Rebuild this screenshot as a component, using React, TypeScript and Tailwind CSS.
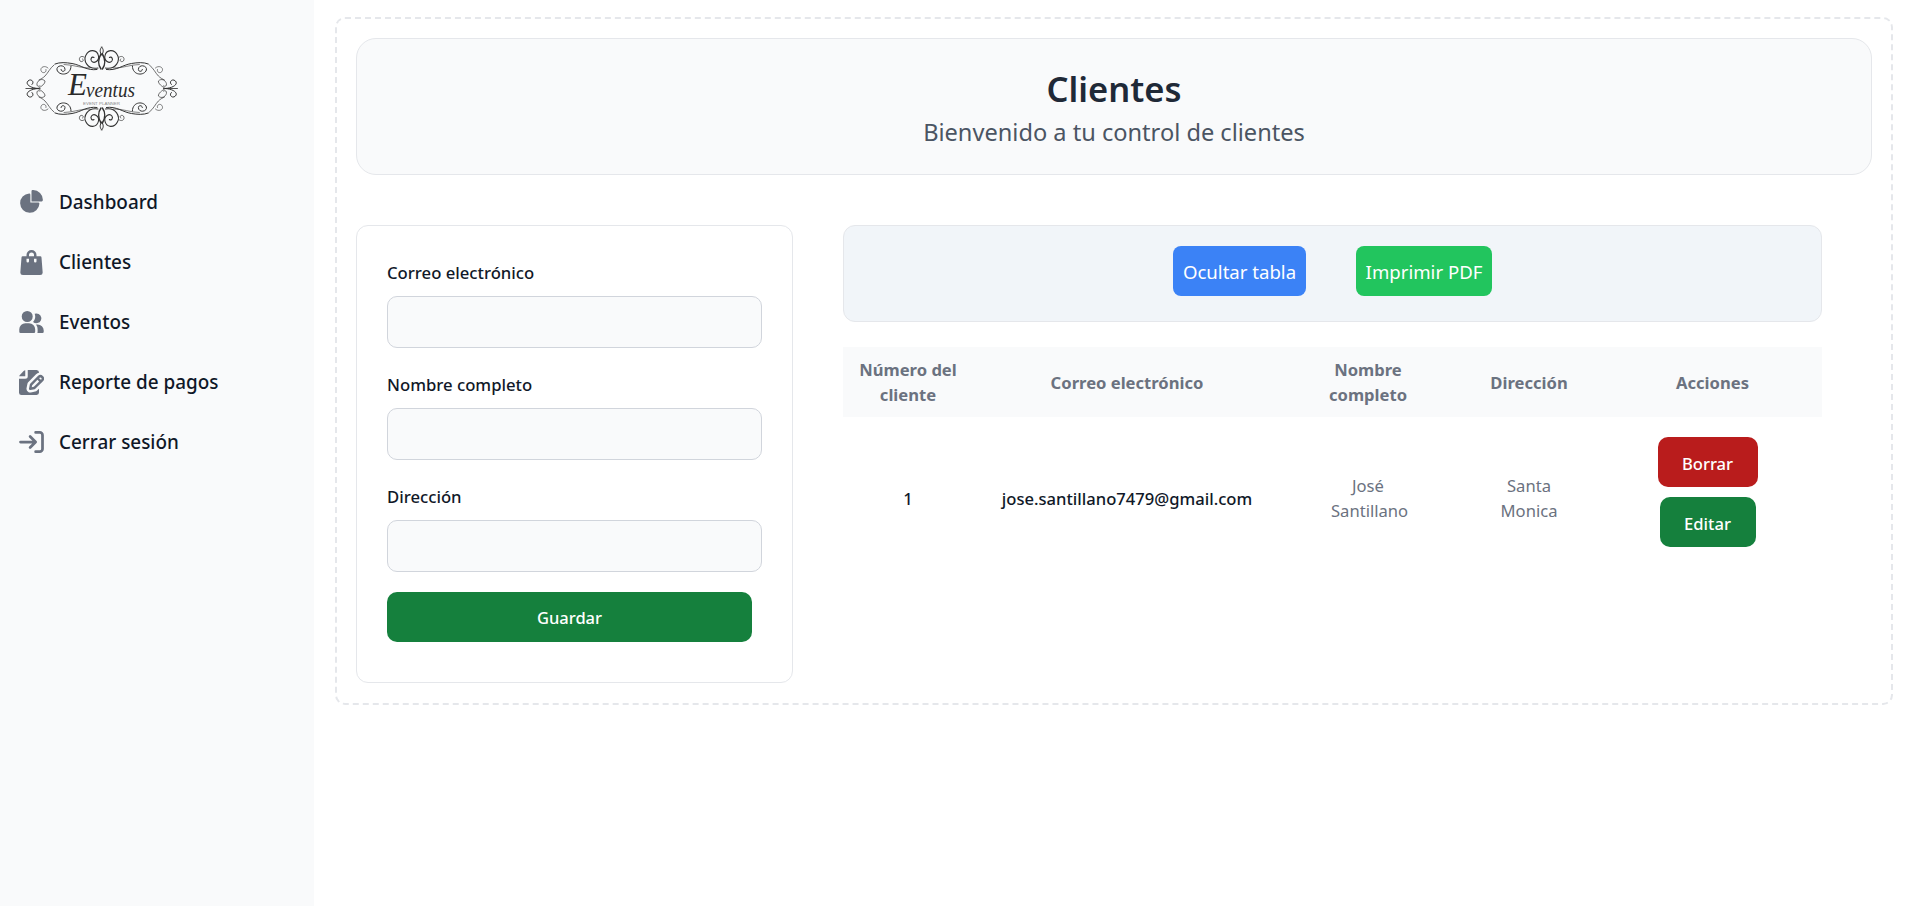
import React from 'react';

const navItems = [
  {
    label: 'Dashboard',
    view: '0 0 22 21',
    cls: 'w-[25px] h-[24px]',
    paths: [
      'M16.975 11H10V4.025a1 1 0 0 0-1.066-.998 8.5 8.5 0 1 0 9.039 9.039.999.999 0 0 0-1-1.066h.002Z',
      'M12.5 0c-.157 0-.311.01-.565.027A1 1 0 0 0 11 1.02V10h8.975a1 1 0 0 0 1-.935c.013-.188.028-.374.028-.565A8.51 8.51 0 0 0 12.5 0Z',
    ],
  },
  {
    label: 'Clientes',
    view: '0 0 18 20',
    cls: 'w-[25px] h-[25px]',
    paths: [
      'M17 5.923A1 1 0 0 0 16 5h-3V4a4 4 0 1 0-8 0v1H2a1 1 0 0 0-1 .923L.086 17.846A2 2 0 0 0 2.08 20h13.84a2 2 0 0 0 1.994-2.153L17 5.923ZM7 9a1 1 0 0 1-2 0V7h2v2Zm0-5a2 2 0 1 1 4 0v1H7V4Zm6 5a1 1 0 1 1-2 0V7h2v2Z',
    ],
  },
  {
    label: 'Eventos',
    view: '0 0 20 18',
    cls: 'w-[25px] h-[22px]',
    paths: [
      'M14 2a3.963 3.963 0 0 0-1.4.267 6.439 6.439 0 0 1-1.331 6.638A4 4 0 1 0 14 2Zm1 9h-1.264A6.957 6.957 0 0 1 15 15v2a2.97 2.97 0 0 1-.184 1H19a1 1 0 0 0 1-1v-1a5.006 5.006 0 0 0-5-5ZM6.5 9a4.5 4.5 0 1 0 0-9 4.5 4.5 0 0 0 0 9ZM8 10H5a5.006 5.006 0 0 0-5 5v2a1 1 0 0 0 1 1h11a1 1 0 0 0 1-1v-2a5.006 5.006 0 0 0-5-5Z',
    ],
  },
  {
    label: 'Reporte de pagos',
    view: '0 0 20 20',
    cls: 'w-[25px] h-[25px]',
    paths: [
      'M5 5V.13a2.96 2.96 0 0 0-1.293.749L.879 3.707A2.96 2.96 0 0 0 .13 5H5Z',
      'M6.737 11.061a2.961 2.961 0 0 1 .81-1.515l6.117-6.116A4.839 4.839 0 0 1 16 2.141V2a1.97 1.97 0 0 0-1.933-2H7v5a2 2 0 0 1-2 2H0v11a1.969 1.969 0 0 0 1.933 2h12.134A1.97 1.97 0 0 0 16 18v-3.093l-1.546 1.546c-.413.413-.94.695-1.513.81l-3.4.679a2.947 2.947 0 0 1-1.85-.227 2.96 2.96 0 0 1-1.635-3.257l.681-3.397Z',
      'M8.961 16a.93.93 0 0 0 .189-.019l3.4-.679a.961.961 0 0 0 .49-.263l6.118-6.117a2.884 2.884 0 0 0-4.079-4.078l-6.117 6.117a.96.96 0 0 0-.263.491l-.679 3.4A.961.961 0 0 0 8.961 16Zm7.477-9.8a.958.958 0 0 1 .68-.281.961.961 0 0 1 .682 1.644l-.315.315-1.36-1.36.313-.318Zm-5.911 5.911 4.236-4.236 1.359 1.359-4.236 4.237-1.7.339.341-1.699Z',
    ],
  },
];

// one corner of the ornament, mirrored four times around the logo centre
const Quarter: React.FC = () => (
  <g fill="none" stroke="#333333" strokeWidth="0.9" strokeLinecap="round">
    <path d="M91.7 12 C89.6 14.5 89.6 17 91.7 20" strokeWidth="1" />
    <path d="M91 19 C88 24 88 30 91 34" strokeWidth="1.5" />
    <path d="M88 33 C77 35 73 25 76 20 C79 14 87 14 88.5 21 C89.5 26 84 29 81.5 26 C80 24 82 21 84 22.5" strokeWidth="1.1" />
    <path d="M74 22 C71 20 68 23 70 26 C72 28 75 25 72.5 24" strokeWidth="0.7" />
    <path d="M87 34.5 C77 36 71 30 62 28.5 C56 27.5 50 27 45 29" strokeWidth="1" />
    <path d="M80 33 C71 33.5 63 29.5 54 29.5" strokeWidth="0.6" />
    <path d="M61 31 C61 41 49 41 47 35 C46 30 55 29 55 34.5 C55 37 51 37 51 34.5" strokeWidth="1" />
    <path d="M44 30 C40 33 38 38 35 41 C33 43 31 44 29 45" strokeWidth="0.7" />
    <path d="M38 33 C35 30 30 32 31 35.5 C32 39 37 38 36 34.5" strokeWidth="0.6" />
    <path d="M28 53.5 C20 53 15 49 18 46 C21 43 25 47 22 49.5" strokeWidth="1" />
    <path d="M28 53.5 C32 51 35 49 35 46 C32 43 28 45 27 48.5 C26.5 51 28 52 30 51" strokeWidth="0.7" />
    <path d="M16 53.5 L30 53.5" strokeWidth="0.6" />
  </g>
);

const Logo: React.FC = () => (
  <svg viewBox="0 0 180 107" className="w-[180px] h-[107px] ml-[10px]">
    <Quarter />
    <g transform="matrix(-1 0 0 1 183.4 0)"><Quarter /></g>
    <g transform="matrix(1 0 0 -1 0 107)"><Quarter /></g>
    <g transform="matrix(-1 0 0 -1 183.4 107)"><Quarter /></g>
    <text x="58" y="60" fontFamily="'Liberation Serif', serif" fontStyle="italic" fontSize="31" fill="#2a2a2a">E</text>
    <text x="76" y="62" fontFamily="'Liberation Serif', serif" fontStyle="italic" fontSize="20" fill="#2a2a2a" textLength="49" lengthAdjust="spacingAndGlyphs">ventus</text>
    <text x="73" y="70" fontFamily="'Liberation Sans', sans-serif" fontSize="3.6" fill="#888888" textLength="37" lengthAdjust="spacingAndGlyphs">EVENT PLANNER</text>
  </svg>
);

const Field: React.FC<{ label: string }> = ({ label }) => (
  <div>
    <label className="block text-[16.7px] leading-[25px] font-medium text-gray-900 mb-[10px] -translate-y-px">{label}</label>
    <input className="block w-[375px] h-[52px] bg-gray-50 border border-gray-300 rounded-[10px]" />
  </div>
);

const App: React.FC = () => {
  return (
    <div className="flex min-h-screen bg-white font-['Noto_Sans',sans-serif]">
      <aside className="w-[314px] shrink-0 bg-[#f9fafb]">
        <div className="pt-[35px] h-[172px]">
          <Logo />
        </div>
        <nav>
          {navItems.map((item) => (
            <a key={item.label} className="flex items-center h-[60px] pl-[19px] text-[18.9px] font-medium text-gray-900">
              <span className="flex items-center justify-center w-[25px] mr-[15px]">
                <svg viewBox={item.view} className={`${item.cls} text-[#6b7280]`} fill="currentColor">
                  {item.paths.map((d) => (
                    <path key={d} d={d} />
                  ))}
                </svg>
              </span>
              {item.label}
            </a>
          ))}
          <a className="flex items-center h-[60px] pl-[19px] text-[18.9px] font-medium text-gray-900">
            <span className="flex items-center justify-center w-[25px] mr-[15px]">
              <svg viewBox="0 0 18 16" className="w-[25px] h-[22px] text-[#6b7280]" fill="none" stroke="currentColor" strokeWidth="2" strokeLinecap="round" strokeLinejoin="round">
                <path d="M1 8h11m0 0L8 4m4 4-4 4m4-11h3a2 2 0 0 1 2 2v10a2 2 0 0 1-2 2h-3" />
              </svg>
            </span>
            Cerrar sesión
          </a>
        </nav>
      </aside>

      <main className="flex-1 pl-[21px] pr-[15px] pt-[17px]">
        <div className="h-[688px] border-2 border-dashed border-gray-200 rounded-[10px] pl-[19px] pr-[19px] pt-[19px]">
          <div className="h-[137px] flex flex-col items-center justify-center pt-[2px] bg-[#f9fafb] border border-gray-200 rounded-[20px]">
            <h1 className="text-[34.5px] leading-[46px] font-semibold text-[#1f2937]">Clientes</h1>
            <p className="text-[23.6px] leading-[34px] mt-[3px] text-[#4b5563]">Bienvenido a tu control de clientes</p>
          </div>

          <div className="flex mt-[50px]">
            <form className="w-[437px] h-[458px] shrink-0 border border-gray-200 rounded-[12px] pl-[30px] pt-[35px] flex flex-col gap-[25px]">
              <Field label="Correo electrónico" />
              <Field label="Nombre completo" />
              <Field label="Dirección" />
              <button type="button" className="w-[365px] h-[50px] -mt-[5px] pt-[2px] bg-[#15803d] text-white text-[16.5px] font-medium rounded-[10px]">Guardar</button>
            </form>

            <div className="w-[979px] ml-[50px]">
              <div className="h-[97px] flex items-start justify-center gap-[50px] pt-[20px] bg-[#f1f5f9] border border-gray-200 rounded-[12px]">
                <button type="button" className="w-[133px] h-[50px] pt-[2px] bg-[#3b82f6] text-white text-[18.6px] rounded-[8px]">Ocultar tabla</button>
                <button type="button" className="w-[136px] h-[50px] pt-[2px] bg-[#22c55e] text-white text-[18.6px] rounded-[8px]">Imprimir PDF</button>
              </div>

              <table className="w-full table-fixed mt-[25px] text-center text-[16.6px] leading-[25px]">
                <thead className="bg-[#f9fafb] text-[#6b7280]">
                  <tr className="h-[70px]">
                    <th className="w-[130px] font-bold">Número del cliente</th>
                    <th className="w-[308px] font-bold">Correo electrónico</th>
                    <th className="w-[174px] font-bold px-[40px]">Nombre completo</th>
                    <th className="w-[148px] font-bold">Dirección</th>
                    <th className="w-[219px] font-bold">Acciones</th>
                  </tr>
                </thead>
                <tbody>
                  <tr>
                    <td className="font-medium text-gray-900">1</td>
                    <td className="font-medium text-gray-900">jose.santillano7479@gmail.com</td>
                    <td className="text-[#6b7280] px-[50px]">José Santillano</td>
                    <td className="text-[#6b7280] px-[40px]">Santa Monica</td>
                    <td className="pt-[20px] pb-[32px]">
                      <div className="flex flex-col items-center gap-[10px] pr-[10px]">
                        <button type="button" className="w-[100px] h-[50px] pt-[3px] bg-[#b91c1c] text-white font-medium rounded-[10px]">Borrar</button>
                        <button type="button" className="w-[96px] h-[50px] pt-[3px] bg-[#15803d] text-white font-medium rounded-[10px]">Editar</button>
                      </div>
                    </td>
                  </tr>
                </tbody>
              </table>
            </div>
          </div>
        </div>
      </main>
    </div>
  );
};

export default App;
